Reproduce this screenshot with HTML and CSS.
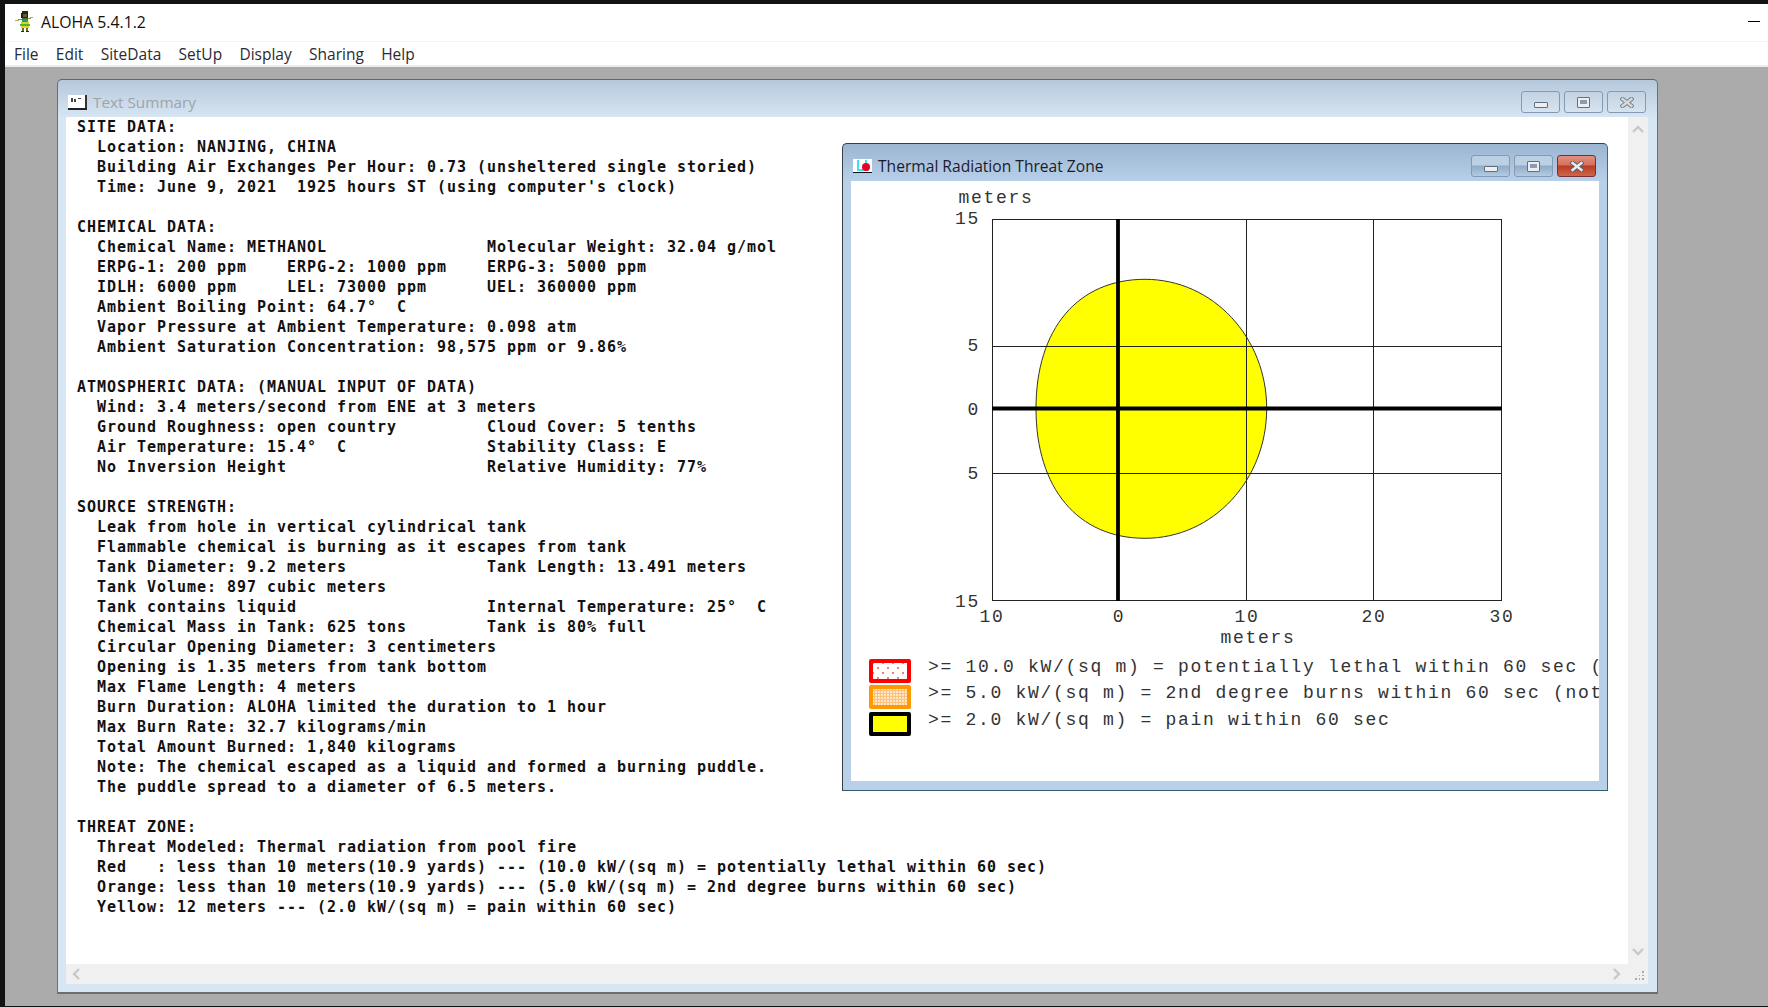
FILE: index.html
```html
<!DOCTYPE html>
<html lang="en">
<head>
    <meta charset="UTF-8">
    <meta name="viewport" content="width=device-width, initial-scale=1.0">
    <title>ALOHA 5.4.1.2</title>
    <link rel="stylesheet" href="styles.css">
</head>
<body>
<div class="app">
    <header class="app-title">
        <svg class="hula" viewBox="0 0 20 21" shape-rendering="crispEdges">
            <rect x="7" y="0" width="6" height="2" fill="#2b2b12"/>
            <rect x="6" y="2" width="7" height="5" fill="#23230f"/>
            <rect x="8" y="3" width="4" height="3" fill="#6b5a22"/>
            <rect x="7" y="7" width="6" height="2" fill="#3f7d4a"/>
            <rect x="13" y="7" width="3" height="1" fill="#8c8c3a"/>
            <rect x="15" y="6" width="3" height="1" fill="#a9a95a"/>
            <rect x="3" y="8" width="4" height="1" fill="#8c8c3a"/>
            <rect x="0" y="9" width="4" height="1" fill="#a9a95a"/>
            <rect x="7" y="9" width="6" height="2" fill="#2f9a6a"/>
            <rect x="6" y="11" width="8" height="2" fill="#c9d82a"/>
            <rect x="5" y="13" width="10" height="2" fill="#5fae2c"/>
            <rect x="6" y="15" width="8" height="2" fill="#d8d820"/>
            <rect x="7" y="17" width="2" height="3" fill="#6b6b22"/>
            <rect x="11" y="17" width="2" height="3" fill="#6b6b22"/>
            <rect x="6" y="20" width="3" height="1" fill="#2b2b12"/>
            <rect x="11" y="20" width="3" height="1" fill="#2b2b12"/>
        </svg>
        <span class="app-name">ALOHA 5.4.1.2</span>
        <span class="app-min"></span>
    </header>
    <nav class="menu">
        <span>File</span>
        <span>Edit</span>
        <span>SiteData</span>
        <span>SetUp</span>
        <span>Display</span>
        <span>Sharing</span>
        <span>Help</span>
    </nav>
    <main class="mdi">
        <section class="win summary">
            <div class="win-title">
                <svg class="win-icon" viewBox="0 0 19 15" shape-rendering="crispEdges">
                    <rect x="0" y="0" width="18" height="13" fill="#fff"/>
                    <rect x="3" y="3" width="2" height="4" fill="#444"/>
                    <rect x="6" y="4" width="2" height="3" fill="#444"/>
                    <rect x="10" y="3" width="3" height="1" fill="#444"/>
                    <rect x="17" y="0" width="2" height="14" fill="#333"/>
                    <rect x="0" y="13" width="19" height="2" fill="#222"/>
                </svg>
                <span class="win-name">Text Summary</span>
                <div class="win-btns">
                    <button class="btn"><span class="glyph-min"></span></button>
                    <button class="btn"><span class="glyph-max"></span></button>
                    <button class="btn"><svg class="glyph-x" viewBox="0 0 14 11"><path class="x-out" d="M2.5 2 L11.5 9 M11.5 2 L2.5 9"/><path class="x-in" d="M2.5 2 L11.5 9 M11.5 2 L2.5 9"/></svg></button>
                </div>
            </div>
            <div class="summary-body">
<pre class="report">SITE DATA:
  Location: NANJING, CHINA
  Building Air Exchanges Per Hour: 0.73 (unsheltered single storied)
  Time: June 9, 2021  1925 hours ST (using computer's clock)

CHEMICAL DATA:
  Chemical Name: METHANOL                Molecular Weight: 32.04 g/mol
  ERPG-1: 200 ppm    ERPG-2: 1000 ppm    ERPG-3: 5000 ppm
  IDLH: 6000 ppm     LEL: 73000 ppm      UEL: 360000 ppm
  Ambient Boiling Point: 64.7°  C
  Vapor Pressure at Ambient Temperature: 0.098 atm
  Ambient Saturation Concentration: 98,575 ppm or 9.86%

ATMOSPHERIC DATA: (MANUAL INPUT OF DATA)
  Wind: 3.4 meters/second from ENE at 3 meters
  Ground Roughness: open country         Cloud Cover: 5 tenths
  Air Temperature: 15.4°  C              Stability Class: E
  No Inversion Height                    Relative Humidity: 77%

SOURCE STRENGTH:
  Leak from hole in vertical cylindrical tank
  Flammable chemical is burning as it escapes from tank
  Tank Diameter: 9.2 meters              Tank Length: 13.491 meters
  Tank Volume: 897 cubic meters
  Tank contains liquid                   Internal Temperature: 25°  C
  Chemical Mass in Tank: 625 tons        Tank is 80% full
  Circular Opening Diameter: 3 centimeters
  Opening is 1.35 meters from tank bottom
  Max Flame Length: 4 meters
  Burn Duration: ALOHA limited the duration to 1 hour
  Max Burn Rate: 32.7 kilograms/min
  Total Amount Burned: 1,840 kilograms
  Note: The chemical escaped as a liquid and formed a burning puddle.
  The puddle spread to a diameter of 6.5 meters.

THREAT ZONE:
  Threat Modeled: Thermal radiation from pool fire
  Red   : less than 10 meters(10.9 yards) --- (10.0 kW/(sq m) = potentially lethal within 60 sec)
  Orange: less than 10 meters(10.9 yards) --- (5.0 kW/(sq m) = 2nd degree burns within 60 sec)
  Yellow: 12 meters --- (2.0 kW/(sq m) = pain within 60 sec)</pre>
                <div class="vbar">
                    <svg viewBox="0 0 12 8"><path d="M1 7 L6 2 L11 7" class="arrow"/></svg>
                    <svg viewBox="0 0 12 8"><path d="M1 1 L6 6 L11 1" class="arrow"/></svg>
                </div>
                <div class="hbar">
                    <svg viewBox="0 0 8 12"><path d="M7 1 L2 6 L7 11" class="arrow"/></svg>
                    <svg viewBox="0 0 8 12"><path d="M1 1 L6 6 L1 11" class="arrow"/></svg>
                </div>
                <div class="grip">
                    <svg viewBox="0 0 12 12" shape-rendering="crispEdges" fill="#a8a8a8">
                        <rect x="9" y="1" width="2" height="2"/>
                        <rect x="5" y="5" width="2" height="2"/><rect x="9" y="5" width="2" height="2"/>
                        <rect x="1" y="9" width="2" height="2"/><rect x="5" y="9" width="2" height="2"/><rect x="9" y="9" width="2" height="2"/>
                    </svg>
                </div>
            </div>
        </section>

        <section class="win thermal">
            <div class="win-title">
                <svg class="win-icon" viewBox="0 0 19 15" shape-rendering="crispEdges">
                    <rect x="0" y="0" width="19" height="13" fill="#fff"/>
                    <rect x="4" y="1" width="2" height="11" fill="#3fe0f0"/>
                    <rect x="4" y="10" width="12" height="2" fill="#3fe0f0"/>
                    <rect x="12" y="1" width="2" height="3" fill="#3fe0f0"/>
                    <rect x="0" y="13" width="19" height="1" fill="#111"/>
                    <circle cx="13" cy="8" r="4" fill="#f00020" shape-rendering="auto"/>
                </svg>
                <span class="win-name">Thermal Radiation Threat Zone</span>
                <div class="win-btns">
                    <button class="btn"><span class="glyph-min"></span></button>
                    <button class="btn"><span class="glyph-max"></span></button>
                    <button class="btn btn-close"><svg class="glyph-x" viewBox="0 0 14 11"><path class="x-out" d="M2.5 2 L11.5 9 M11.5 2 L2.5 9"/><path class="x-in" d="M2.5 2 L11.5 9 M11.5 2 L2.5 9"/></svg></button>
                </div>
            </div>
            <div class="thermal-body">
                <svg class="plot" viewBox="851 181 748 464">
                    <path class="zone" d="M1145 279.3 C1213 279.3 1266.7 337.5 1266.7 408.5 C1266.7 480 1213 538.3 1145 538.3 C1078 538.3 1036 488.5 1036 408.5 C1036 328.5 1078 279.3 1145 279.3 Z"/>
                    <rect class="grid" x="992.5" y="219.5" width="509" height="381"/>
                    <path class="grid" d="M1246.5 219V601 M1373.5 219V601 M992 346.5H1502 M992 473.5H1502"/>
                    <path class="axis" d="M1118 219V601 M992 408.5H1502"/>
                    <text class="lbl" x="996" y="203" text-anchor="middle">meters</text>
                    <text class="lbl" x="980" y="224" text-anchor="end">15</text>
                    <text class="lbl" x="980" y="351" text-anchor="end">5</text>
                    <text class="lbl" x="980" y="415" text-anchor="end">0</text>
                    <text class="lbl" x="980" y="479" text-anchor="end">5</text>
                    <text class="lbl" x="980" y="607" text-anchor="end">15</text>
                    <text class="lbl" x="992" y="622" text-anchor="middle">10</text>
                    <text class="lbl" x="1119" y="622" text-anchor="middle">0</text>
                    <text class="lbl" x="1247" y="622" text-anchor="middle">10</text>
                    <text class="lbl" x="1374" y="622" text-anchor="middle">20</text>
                    <text class="lbl" x="1502" y="622" text-anchor="middle">30</text>
                    <text class="lbl" x="1258" y="643" text-anchor="middle">meters</text>
                </svg>
                <div class="legend">
                    <div class="legend-row"><span class="swatch sw-red"></span><span class="legend-text">&gt;= 10.0 kW/(sq m) = potentially lethal within 60 sec (</span></div>
                    <div class="legend-row"><span class="swatch sw-orange"></span><span class="legend-text">&gt;= 5.0 kW/(sq m) = 2nd degree burns within 60 sec (not</span></div>
                    <div class="legend-row"><span class="swatch sw-yellow"></span><span class="legend-text">&gt;= 2.0 kW/(sq m) = pain within 60 sec</span></div>
                </div>
            </div>
        </section>
    </main>
</div>
</body>
</html>
```

FILE: styles.css
```css
*{
    margin: 0;
    padding: 0;
    box-sizing: border-box;
}
body{
    background-color: #101214;
    width: 1768px;
    height: 1007px;
    overflow: hidden;
    font-family: "Open Sans", "Noto Sans", sans-serif;
}
.app{
    margin: 4px 0 0 5px;
    height: 1002px;
    display: flex;
    flex-direction: column;
}
.app-title{
    height: 38px;
    background-color: #fff;
    border-bottom: 1px solid #f3f3f3;
    display: flex;
    align-items: center;
    padding: 0 0 2px 10px;
}
.hula{
    width: 20px;
    height: 21px;
}
.app-name{
    margin-left: 6px;
    font-size: 15.8px;
    color: #111;
}
.app-min{
    margin-left: auto;
    margin-right: 8px;
    width: 12px;
    height: 1px;
    background-color: #000;
}
.menu{
    height: 25px;
    background-color: #fff;
    border-bottom: 2px solid #ececec;
    display: flex;
    align-items: center;
    gap: 17.3px;
    padding-left: 9px;
    font-size: 15.5px;
    color: #2a2a35;
}
.mdi{
    flex: 1;
    position: relative;
    background-color: #ababab;
    padding: 12px 0 12px 52px;
}
.win{
    display: flex;
    flex-direction: column;
    border-radius: 5px 5px 0 0;
}
.win-title{
    height: 37px;
    display: flex;
    align-items: center;
    padding: 7px 2px 0 2px;
    flex-shrink: 0;
}
.win-icon{
    width: 19px;
    height: 15px;
    margin-right: 6px;
}
.win-name{
    font-size: 15.3px;
}
.win-btns{
    margin-left: auto;
    display: flex;
    gap: 4px;
}
.btn{
    width: 39px;
    height: 22px;
    border: 1px solid #8499b3;
    border-radius: 3px;
    display: flex;
    align-items: center;
    justify-content: center;
}
.glyph-min{
    width: 14px;
    height: 6px;
    margin-top: 5px;
    background-color: #eee;
    border: 1px solid #5f6f85;
    border-radius: 1px;
}
.glyph-max{
    width: 13px;
    height: 11px;
    background-color: #eee;
    border: 1px solid #5f6f85;
    border-radius: 1px;
    display: flex;
    align-items: center;
    justify-content: center;
}
.glyph-max::after{
    content: "";
    width: 7px;
    height: 4px;
    background-color: #8a9ab8;
}
.glyph-x{
    width: 14px;
    height: 11px;
}
.x-out{
    fill: none;
    stroke: #55606e;
    stroke-width: 4.4;
    stroke-linecap: square;
}
.x-in{
    fill: none;
    stroke: #ececec;
    stroke-width: 2.4;
    stroke-linecap: square;
}

/* text summary window */
.summary{
    width: 1601px;
    height: 915px;
    border: 1px solid #6e6e6e;
    border-top-color: #666;
    border-bottom-width: 2px;
    background: linear-gradient(#b5c8db 0, #d8e6f3 38px);
    padding: 0 9px 9px 8px;
}
.summary .win-name{
    color: #a0a4a8;
}
.summary .btn{
    background: linear-gradient(#c3d3e3, #d6e3f0);
}
.summary .x-in{
    stroke: #d8d8d8;
}
.summary .x-out{
    stroke: #77808c;
}
.summary-body{
    flex: 1;
    display: grid;
    grid-template-columns: 1562px 20px;
    grid-template-rows: 847px 20px;
    min-height: 0;
}
.report{
    background-color: #fff;
    padding: 0 0 0 11px;
    font-family: "DejaVu Sans Mono", monospace;
    font-weight: bold;
    font-size: 15px;
    letter-spacing: 0.97px;
    line-height: 20px;
    color: #111;
    overflow: hidden;
}
.vbar{
    background-color: #f0f0f0;
    display: flex;
    flex-direction: column;
    justify-content: space-between;
    align-items: center;
    padding: 8px 0 8px;
}
.vbar svg{
    width: 12px;
    height: 8px;
}
.hbar{
    background-color: #f0f0f0;
    display: flex;
    justify-content: space-between;
    align-items: center;
    padding: 0 7px 0 6px;
}
.hbar svg{
    width: 8px;
    height: 12px;
}
.arrow{
    fill: none;
    stroke: #c8c8c8;
    stroke-width: 2.4;
}
.grip{
    background-color: #f0f0f0;
    display: flex;
    align-items: flex-end;
    justify-content: flex-end;
    padding: 0 3px 3px 0;
}
.grip svg{
    width: 11px;
    height: 11px;
}

/* thermal window, sits over the summary */
.thermal{
    position: absolute;
    left: 837px;
    top: 76px;
    width: 766px;
    height: 648px;
    border: 1px solid #3a3f45;
    border-right-color: #22758c;
    border-bottom-color: #2f5d6a;
    background: linear-gradient(#9bb5d1 0, #b9d0e9 38px);
    padding: 0 8px 9px 8px;
}
.thermal .win-name{
    color: #1b1b2c;
    font-size: 15.6px;
}
.thermal .win-title{
    padding-right: 3px;
}
.thermal .btn{
    background: linear-gradient(#bcd0e4 0, #bcd0e4 45%, #8fabc8 50%, #b4cbe2 100%);
}
.thermal .btn-close{
    background: linear-gradient(#e09080 0, #d6705c 45%, #b83c22 50%, #d0654a 100%);
    border-color: #74303a;
}
.thermal-body{
    flex: 1;
    background-color: #fff;
    overflow: hidden;
    display: flex;
    flex-direction: column;
}
.plot{
    width: 748px;
    height: 464px;
    flex-shrink: 0;
}
.zone{
    fill: #ffff00;
    stroke: #333;
    stroke-width: 1;
}
.grid{
    fill: none;
    stroke: #222;
    stroke-width: 1;
}
.axis{
    fill: none;
    stroke: #000;
    stroke-width: 3.8;
}
.lbl{
    font-family: "Liberation Mono", monospace;
    font-size: 18px;
    letter-spacing: 1.7px;
    fill: #333;
}
.legend{
    padding: 14px 0 0 18px;
    display: flex;
    flex-direction: column;
    gap: 2.4px;
}
.legend-row{
    display: flex;
    align-items: flex-start;
    height: 24px;
    white-space: nowrap;
}
.swatch{
    width: 42px;
    height: 24px;
    flex-shrink: 0;
    border: 4px solid;
    border-radius: 2px;
    margin-right: 17px;
}
.sw-red{
    border-color: #ff0000;
    background-color: #fff;
    background-image: radial-gradient(#f58080 0.8px, transparent 1.1px), radial-gradient(#f58080 0.8px, transparent 1.1px);
    background-size: 10px 10px;
    background-position: 0 0, 5px 5px;
}
.sw-orange{
    border-color: #ff9900;
    background-color: #fff;
    background-image: radial-gradient(#ffc27a 1.1px, transparent 1.6px);
    background-size: 3px 3px;
}
.sw-yellow{
    border-color: #000;
    background-color: #ffff00;
}
.legend-text{
    font-family: "Liberation Mono", monospace;
    font-size: 18px;
    letter-spacing: 1.7px;
    line-height: 16px;
    color: #333;
}
```
